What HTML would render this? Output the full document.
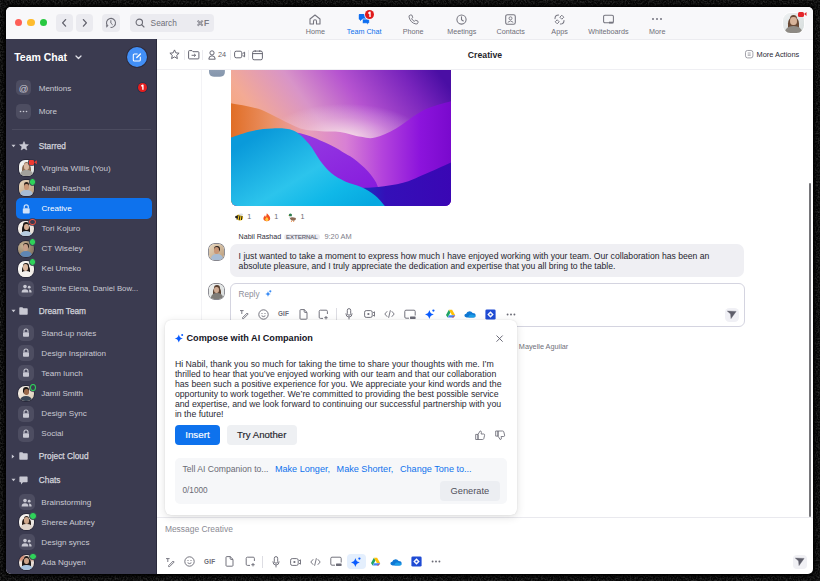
<!DOCTYPE html>
<html><head><meta charset="utf-8"><style>
html,body{margin:0;padding:0;}
body{width:820px;height:581px;overflow:hidden;position:relative;background:#0c0c0c;font-family:"Liberation Sans", sans-serif;}
.t{position:absolute;white-space:nowrap;line-height:14px;}
.b{position:absolute;box-sizing:border-box;}
.s{position:absolute;overflow:visible;}
</style></head><body>
<svg style="position:absolute;left:0;top:0" width="820" height="581"><filter id="nz"><feTurbulence type="fractalNoise" baseFrequency="0.6" numOctaves="2" seed="3"/><feColorMatrix values="0 0 0 0 0.09  0 0 0 0 0.09  0 0 0 0 0.09  0 0 0 1.1 -0.42"/></filter><rect width="820" height="581" fill="#060606"/><rect width="820" height="581" filter="url(#nz)"/></svg>
<div class="b" style="left:6px;top:6.5px;width:806.5px;height:567.5px;background:#fff;border-radius:5px;box-shadow:0 0 3px 2px #000;"></div>
<div class="b" style="left:6px;top:6.5px;width:806.5px;height:33.0px;background:#f8f8fa;border-radius:5px 5px 0 0;border-bottom:1px solid #ececf0;"></div>
<div class="b" style="left:14.900000000000002px;top:19.0px;width:7.399999999999999px;height:7.399999999999999px;background:#fe5f57;border-radius:50%;"></div>
<div class="b" style="left:27.400000000000002px;top:19.0px;width:7.400000000000002px;height:7.399999999999999px;background:#febc2e;border-radius:50%;"></div>
<div class="b" style="left:40.0px;top:19.0px;width:7.400000000000006px;height:7.399999999999999px;background:#28c840;border-radius:50%;"></div>
<div class="b" style="left:55.8px;top:14.2px;width:17.0px;height:17.7px;background:#ebebf0;border-radius:4px;"></div>
<div class="b" style="left:75.5px;top:14.2px;width:17.0px;height:17.7px;background:#ebebf0;border-radius:4px;"></div>
<div class="b" style="left:102.3px;top:14.2px;width:17.700000000000003px;height:17.7px;background:#ebebf0;border-radius:4px;"></div>
<div class="b" style="left:129.9px;top:14.2px;width:84.4px;height:17.7px;background:#ebebf0;border-radius:4px;"></div>
<svg class="s" style="left:55.8px;top:14.2px;" width="17" height="17.7" viewBox="0 0 17 17.7"><path d="M9.6 5.6 L6.6 8.85 L9.6 12.1" fill="none" stroke="#5f5f6a" stroke-width="1.3" stroke-linecap="round" stroke-linejoin="round"/></svg>
<svg class="s" style="left:75.5px;top:14.2px;" width="17" height="17.7" viewBox="0 0 17 17.7"><path d="M7.4 5.6 L10.4 8.85 L7.4 12.1" fill="none" stroke="#5f5f6a" stroke-width="1.3" stroke-linecap="round" stroke-linejoin="round"/></svg>
<svg class="s" style="left:102.3px;top:14.2px;" width="17.7" height="17.7" viewBox="0 0 17.7 17.7"><path d="M8.6 13.4 A4.5 4.5 0 1 0 5.4 11.6" fill="none" stroke="#6b6b75" stroke-width="1.05"/><path d="M3.9 11.2 L6.6 11.2 L4.6 13.7 Z" fill="#6b6b75"/><path d="M8.85 6.6 V9.1 L10.4 10.6" fill="none" stroke="#6b6b75" stroke-width="0.95" stroke-linecap="round" stroke-linejoin="round"/></svg>
<svg class="s" style="left:135px;top:18px;" width="10" height="10" viewBox="0 0 10 10"><circle cx="4.3" cy="4.3" r="3.2" fill="none" stroke="#6b6b75" stroke-width="1.1"/><path d="M6.6 6.6 L9 9" stroke="#6b6b75" stroke-width="1.1" stroke-linecap="round"/></svg>
<div class="t" style="left:150.6px;top:16.2px;font-size:8.3px;color:#6e6e78;font-weight:400;">Search</div>
<svg class="s" style="left:196.8px;top:19.9px;" width="6.3" height="6.3" viewBox="0 0 7.4 7.4"><path d="M2.5 2.5 H4.9 V4.9 H2.5 Z M2.5 2.5 V1.7 A0.9 0.9 0 1 0 1.7 2.5 H2.5 M4.9 2.5 V1.7 A0.9 0.9 0 1 1 5.7 2.5 H4.9 M4.9 4.9 V5.7 A0.9 0.9 0 1 0 5.7 4.9 H4.9 M2.5 4.9 V5.7 A0.9 0.9 0 1 1 1.7 4.9 H2.5" fill="none" stroke="#6a6a74" stroke-width="0.85"/></svg>
<div class="t" style="left:203.9px;top:16.1px;font-size:8.4px;color:#6a6a74;font-weight:400;-webkit-text-stroke:0.2px #6a6a74">F</div>
<div class="t" style="left:285.4px;width:60px;text-align:center;top:24.5px;font-size:7.2px;color:#6e6e78">Home</div>
<div class="t" style="left:334.22999999999996px;width:60px;text-align:center;top:24.5px;font-size:7.2px;color:#0e72ed">Team Chat</div>
<div class="t" style="left:383.05999999999995px;width:60px;text-align:center;top:24.5px;font-size:7.2px;color:#6e6e78">Phone</div>
<div class="t" style="left:431.89px;width:60px;text-align:center;top:24.5px;font-size:7.2px;color:#6e6e78">Meetings</div>
<div class="t" style="left:480.71999999999997px;width:60px;text-align:center;top:24.5px;font-size:7.2px;color:#6e6e78">Contacts</div>
<div class="t" style="left:529.55px;width:60px;text-align:center;top:24.5px;font-size:7.2px;color:#6e6e78">Apps</div>
<div class="t" style="left:578.38px;width:60px;text-align:center;top:24.5px;font-size:7.2px;color:#6e6e78">Whiteboards</div>
<div class="t" style="left:627.21px;width:60px;text-align:center;top:24.5px;font-size:7.2px;color:#6e6e78">More</div>
<svg class="s" style="left:309px;top:13.5px;" width="12" height="11" viewBox="0 0 12 11"><path d="M1 5 L6 1 L11 5 V10 H7.5 V7.2 A1.5 1.5 0 0 0 4.5 7.2 V10 H1 Z" fill="none" stroke="#75757f" stroke-width="1.1" stroke-linejoin="round"/></svg>
<svg class="s" style="left:357.5px;top:13px;" width="12" height="12.5" viewBox="0 0 12 12.5"><path d="M1.5 1 H7.5 Q8.5 1 8.5 2 V5.8 Q8.5 6.8 7.5 6.8 H3.4 L2 8.2 V6.8 H1.5 Q0.8 6.8 0.8 5.8 V2 Q0.8 1 1.5 1 Z" fill="#0e6ef0"/><path d="M5.2 6 H10.6 Q11.4 6 11.4 6.8 V9.6 Q11.4 10.4 10.6 10.4 H10 V11.8 L8.6 10.4 H5.2 Q4.4 10.4 4.4 9.6 V6.8 Q4.4 6 5.2 6 Z" fill="#0e6ef0" stroke="#f8f8fa" stroke-width="0.7"/></svg>
<div class="b" style="left:365px;top:9.9px;width:9px;height:8.999999999999998px;background:#e01b1b;border-radius:50%;box-shadow:0 0 0 0.8px #f8f8fa;"></div>
<svg class="s" style="left:365px;top:9.9px;" width="9" height="9" viewBox="0 0 9 9"><path d="M3.3 3.3 L5 2.2 V7" fill="none" stroke="#fff" stroke-width="1.4" stroke-linejoin="round"/></svg>
<svg class="s" style="left:407.5px;top:13.5px;" width="11" height="11" viewBox="0 0 11 11"><path d="M2.2 1 L3.8 1 L4.8 3.6 L3.6 4.6 Q4.6 6.6 6.4 7.4 L7.4 6.2 L10 7.2 L10 8.8 Q9.6 10.2 8 10 Q2.5 9 1 3 Q0.8 1.4 2.2 1 Z" fill="none" stroke="#75757f" stroke-width="0.95" stroke-linejoin="round"/></svg>
<svg class="s" style="left:456px;top:13.5px;" width="11" height="11" viewBox="0 0 11 11"><circle cx="5.5" cy="5.5" r="4.6" fill="none" stroke="#75757f" stroke-width="1.05"/><path d="M5.5 2.8 V5.7 L7.3 7" fill="none" stroke="#75757f" stroke-width="1.05" stroke-linecap="round"/></svg>
<svg class="s" style="left:505px;top:13.5px;" width="11" height="11" viewBox="0 0 11 11"><rect x="0.7" y="0.7" width="9.6" height="9.6" rx="1.8" fill="none" stroke="#75757f" stroke-width="1.05"/><circle cx="5.5" cy="4.3" r="1.5" fill="none" stroke="#75757f" stroke-width="0.9"/><path d="M2.8 8.3 Q5.5 5.5 8.2 8.3" fill="none" stroke="#75757f" stroke-width="0.9"/></svg>
<svg class="s" style="left:554px;top:13.5px;" width="11" height="11" viewBox="0 0 11 11"><path d="M1 4.6 Q1 1 4.6 1 M10 6.4 Q10 10 6.4 10" fill="none" stroke="#75757f" stroke-width="1.05" stroke-linecap="round"/><path d="M7.8 1.2 L9.8 3.2 L7.8 5.2 L5.8 3.2 Z M3.2 5.8 L5.2 7.8 L3.2 9.8 L1.2 7.8 Z" fill="none" stroke="#75757f" stroke-width="0.95" stroke-linejoin="round"/></svg>
<svg class="s" style="left:602.5px;top:13.5px;" width="11" height="11" viewBox="0 0 11 11"><rect x="0.6" y="1.2" width="9.8" height="7.6" rx="1.3" fill="none" stroke="#75757f" stroke-width="1.05"/><path d="M6 8.6 H10.4" stroke="#75757f" stroke-width="1.8"/></svg>
<svg class="s" style="left:651px;top:16px;" width="12" height="6" viewBox="0 0 12 6"><circle cx="2" cy="3" r="1" fill="#75757f"/><circle cx="6" cy="3" r="1" fill="#75757f"/><circle cx="10" cy="3" r="1" fill="#75757f"/></svg>
<div class="b" style="left:783.35px;top:12.600000000000001px;width:20.5px;height:20.5px;border-radius:7.5px;overflow:hidden;background:linear-gradient(135deg,#eef1f2,#d6dcdc);box-shadow:0 0 0 0.7px #fff"><div style="position:absolute;left:4.92px;top:4.51px;width:10.66px;height:14.35px;border-radius:45% 45% 30% 30%;background:#6a4a36"></div><div style="position:absolute;left:6.3549999999999995px;top:2.0500000000000003px;width:7.79px;height:8.200000000000001px;border-radius:50% 50% 40% 40%;background:#6a4a36"></div><div style="position:absolute;left:6.970000000000001px;top:4.1000000000000005px;width:6.5600000000000005px;height:8.61px;border-radius:50%;background:#d8b49a"></div><div style="position:absolute;left:2.0500000000000003px;top:13.120000000000001px;width:16.400000000000002px;height:12.299999999999999px;border-radius:48% 48% 0 0;background:#8e8a84"></div></div>
<div class="b" style="left:798.3px;top:11.5px;width:6.2000000000000455px;height:5.0px;background:#e4262b;border-radius:1.5px;"></div>
<svg class="s" style="left:803.5px;top:12px;" width="3" height="4" viewBox="0 0 3 4"><path d="M0 2 L2.5 0 V4 Z" fill="#e4262b"/></svg>
<div class="b" style="left:6px;top:39px;width:151px;height:535px;background:#3b3b50;border-radius:0 0 0 5px;border-right:1px solid #2a2a3c;"></div>
<div class="t" style="left:14.2px;top:50.2px;font-size:10.5px;color:#fff;font-weight:700;">Team Chat</div>
<svg class="s" style="left:74.5px;top:54.5px;" width="7" height="5" viewBox="0 0 7 5"><path d="M1 1 L3.5 3.5 L6 1" fill="none" stroke="#e0e0e8" stroke-width="1.25" stroke-linecap="round" stroke-linejoin="round"/></svg>
<div class="b" style="left:126.8px;top:46.8px;width:20.39999999999999px;height:20.400000000000006px;background:#428ff6;border-radius:50%;box-shadow:0 0 0 0.8px #2c2838;"></div>
<svg class="s" style="left:131px;top:51px;" width="12" height="12" viewBox="0 0 12 12"><path d="M6.6 3 H3.4 Q2.3 3 2.3 4.1 V8.9 Q2.3 10 3.4 10 H8.2 Q9.3 10 9.3 8.9 V5.8" fill="none" stroke="#fff" stroke-width="1.05"/><path d="M5.8 6.5 L9.4 2.9" stroke="#fff" stroke-width="1.4" stroke-linecap="round"/></svg>
<div class="b" style="left:16px;top:80.3px;width:15px;height:15.200000000000003px;background:#4d4d61;border-radius:4.5px;"></div>
<div class="t" style="left:18.8px;top:81.69999999999999px;font-size:9.5px;color:#c9c9d3;font-weight:400;">@</div>
<div class="t" style="left:38.7px;top:81.6px;font-size:8.05px;color:#cacad3;font-weight:400;">Mentions</div>
<div class="b" style="left:138.2px;top:83.3px;width:8.800000000000011px;height:8.799999999999997px;background:#e41e1e;border-radius:50%;box-shadow:0 0 0 0.8px #25304a;"></div>
<svg class="s" style="left:138.2px;top:83.3px;" width="8.8" height="8.8" viewBox="0 0 8.8 8.8"><path d="M3.3 3.2 L4.9 2.2 V6.8" fill="none" stroke="#fff" stroke-width="1.4" stroke-linejoin="round"/></svg>
<div class="b" style="left:16px;top:104px;width:15px;height:15px;background:#4d4d61;border-radius:4.5px;"></div>
<svg class="s" style="left:16px;top:104px;" width="15" height="15" viewBox="0 0 15 15"><circle cx="4.5" cy="7.5" r="0.8" fill="#c9c9d3"/><circle cx="7.5" cy="7.5" r="0.8" fill="#c9c9d3"/><circle cx="10.5" cy="7.5" r="0.8" fill="#c9c9d3"/></svg>
<div class="t" style="left:38.7px;top:105.1px;font-size:8.05px;color:#cacad3;font-weight:400;">More</div>
<div class="b" style="left:12px;top:128.5px;width:139px;height:1.0px;background:#4b4b5f;"></div>
<svg class="s" style="left:11.1px;top:143.6px;" width="5" height="4" viewBox="0 0 5 4"><path d="M0.5 0.8 H4.5 L2.5 3.3 Z" fill="#c9c9d3"/></svg>
<svg class="s" style="left:18.5px;top:140.8px;" width="10" height="10" viewBox="0 0 10 10"><path d="M5 0.6 L6.3 3.5 L9.4 3.7 L7 5.8 L7.8 8.9 L5 7.2 L2.2 8.9 L3 5.8 L0.6 3.7 L3.7 3.5 Z" fill="#c9c9d3" stroke="#c9c9d3" stroke-width="0.6" stroke-linejoin="round"/></svg>
<div class="t" style="left:38.7px;top:138.7px;font-size:7.9px;color:#d4d4dc;font-weight:400;font-size:8.3px;-webkit-text-stroke:0.25px #d4d4dc">Starred</div>
<div class="b" style="left:18.7px;top:160.2px;width:15.6px;height:15.6px;border-radius:6px;overflow:hidden;background:linear-gradient(135deg,#f4f4f2,#dfe3e2);box-shadow:0 0 0 0.7px rgba(25,25,40,0.7)"><div style="position:absolute;left:3.7439999999999998px;top:3.432px;width:8.112px;height:10.92px;border-radius:45% 45% 30% 30%;background:#8a6a52"></div><div style="position:absolute;left:4.836px;top:1.56px;width:5.928px;height:6.24px;border-radius:50% 50% 40% 40%;background:#8a6a52"></div><div style="position:absolute;left:5.304px;top:3.12px;width:4.992px;height:6.552px;border-radius:50%;background:#d9b8a0"></div><div style="position:absolute;left:1.56px;top:9.984px;width:12.48px;height:9.36px;border-radius:48% 48% 0 0;background:#a3a19c"></div></div>
<div class="b" style="left:29px;top:159.6px;width:5.399999999999999px;height:5.0px;background:#ee3b32;border-radius:1.2px;box-shadow:0 0 0 0.8px #303044;"></div>
<svg class="s" style="left:33.9px;top:159.9px;" width="3" height="4.4" viewBox="0 0 3 4.4"><path d="M0 2.2 L2.8 0.2 V4.2 Z" fill="#ee3b32"/></svg>
<div class="t" style="left:41.5px;top:161.6px;font-size:8.1px;color:#cacad3;font-weight:400;">Virginia Willis (You)</div>
<div class="b" style="left:18.7px;top:180.39999999999998px;width:15.6px;height:15.6px;border-radius:6px;overflow:hidden;background:linear-gradient(135deg,#e8d8c0,#b89a78);box-shadow:0 0 0 0.7px rgba(25,25,40,0.7)"><div style="position:absolute;left:4.836px;top:1.56px;width:5.928px;height:6.24px;border-radius:50% 50% 40% 40%;background:#2e221c"></div><div style="position:absolute;left:5.304px;top:3.12px;width:4.992px;height:6.552px;border-radius:50%;background:#c99676"></div><div style="position:absolute;left:1.56px;top:9.984px;width:12.48px;height:9.36px;border-radius:48% 48% 0 0;background:#a8bcd4"></div></div>
<div class="b" style="left:29.599999999999998px;top:178.79999999999998px;width:5.599999999999998px;height:5.600000000000023px;background:#2fd25a;border-radius:50%;border:0.8px solid #3b3b50;box-sizing:content-box;margin:-0.8px 0 0 -0.8px;"></div>
<div class="t" style="left:41.5px;top:181.79999999999998px;font-size:8.1px;color:#cacad3;font-weight:400;">Nabil Rashad</div>
<div class="b" style="left:15.9px;top:198.4px;width:136.1px;height:20.19999999999999px;background:#0e72ed;border-radius:5px;"></div>
<svg class="s" style="left:21.8px;top:203.6px;" width="8.5" height="9.6" viewBox="0 0 8.5 9.6"><path d="M2.2 4.3 V3 A2.05 2.05 0 0 1 6.3 3 V4.3" fill="none" stroke="#cfe2fb" stroke-width="1.2"/><rect x="0.8" y="4.2" width="6.9" height="5.2" rx="0.9" fill="#cfe2fb"/></svg>
<div class="t" style="left:41.5px;top:202.1px;font-size:8.1px;color:#fff;font-weight:400;">Creative</div>
<div class="b" style="left:18.4px;top:220.79999999999998px;width:15.6px;height:15.6px;border-radius:7px;overflow:hidden;background:linear-gradient(135deg,#f6f2ee,#e4dcd4);box-shadow:0 0 0 0.7px rgba(25,25,40,0.7)"><div style="position:absolute;left:3.7439999999999998px;top:3.432px;width:8.112px;height:10.92px;border-radius:45% 45% 30% 30%;background:#1e1816"></div><div style="position:absolute;left:4.836px;top:1.56px;width:5.928px;height:6.24px;border-radius:50% 50% 40% 40%;background:#1e1816"></div><div style="position:absolute;left:5.304px;top:3.12px;width:4.992px;height:6.552px;border-radius:50%;background:#d4ab90"></div><div style="position:absolute;left:1.56px;top:9.984px;width:12.48px;height:9.36px;border-radius:48% 48% 0 0;background:#b8cde0"></div></div>
<div class="b" style="left:29.2px;top:218.8px;width:6.599999999999998px;height:6.599999999999994px;background:#3b3b50;border-radius:50%;border:1.6px solid #f05040;box-shadow:0 0 0 0.8px #3b3b50;"></div>
<div class="t" style="left:41.5px;top:222.1px;font-size:8.1px;color:#cacad3;font-weight:400;">Tori Kojuro</div>
<div class="b" style="left:18.2px;top:241.0px;width:15.6px;height:15.6px;border-radius:7.5px;overflow:hidden;background:radial-gradient(circle at 30% 30%,#c9b494,#6e6254);box-shadow:0 0 0 0.7px rgba(25,25,40,0.7)"><div style="position:absolute;left:4.836px;top:1.56px;width:5.928px;height:6.24px;border-radius:50% 50% 40% 40%;background:#2a211c"></div><div style="position:absolute;left:5.304px;top:3.12px;width:4.992px;height:6.552px;border-radius:50%;background:#c8a088"></div><div style="position:absolute;left:1.56px;top:9.984px;width:12.48px;height:9.36px;border-radius:48% 48% 0 0;background:#5f86b4"></div></div>
<div class="b" style="left:29.599999999999998px;top:239.0px;width:5.599999999999998px;height:5.600000000000023px;background:#2fd25a;border-radius:50%;border:0.8px solid #3b3b50;box-sizing:content-box;margin:-0.8px 0 0 -0.8px;"></div>
<div class="t" style="left:41.5px;top:242.0px;font-size:8.1px;color:#cacad3;font-weight:400;">CT Wiseley</div>
<div class="b" style="left:18.2px;top:261.2px;width:15.6px;height:15.6px;border-radius:7px;overflow:hidden;background:linear-gradient(135deg,#fbfaf8,#ece6e0);box-shadow:0 0 0 0.7px rgba(25,25,40,0.7)"><div style="position:absolute;left:3.7439999999999998px;top:3.432px;width:8.112px;height:10.92px;border-radius:45% 45% 30% 30%;background:#1c1614"></div><div style="position:absolute;left:4.836px;top:1.56px;width:5.928px;height:6.24px;border-radius:50% 50% 40% 40%;background:#1c1614"></div><div style="position:absolute;left:5.304px;top:3.12px;width:4.992px;height:6.552px;border-radius:50%;background:#dbb69c"></div><div style="position:absolute;left:1.56px;top:9.984px;width:12.48px;height:9.36px;border-radius:48% 48% 0 0;background:#f4f0ec"></div></div>
<div class="b" style="left:29.599999999999998px;top:259.2px;width:5.599999999999998px;height:5.600000000000023px;background:#2fd25a;border-radius:50%;border:0.8px solid #3b3b50;box-sizing:content-box;margin:-0.8px 0 0 -0.8px;"></div>
<div class="t" style="left:41.5px;top:262.20000000000005px;font-size:8.1px;color:#cacad3;font-weight:400;">Kei Umeko</div>
<div class="b" style="left:18.1px;top:280.8px;width:16.0px;height:16.0px;background:#4d4d61;border-radius:5px;"></div>
<svg class="s" style="left:20.6px;top:284.3px;" width="11" height="9" viewBox="0 0 11 9"><circle cx="4" cy="2.6" r="1.8" fill="#c9c9d3"/><path d="M0.6 8.4 Q0.6 5.2 4 5.2 Q7.4 5.2 7.4 8.4 Z" fill="#c9c9d3"/><circle cx="8.2" cy="3.2" r="1.4" fill="#c9c9d3"/><path d="M8 5.6 Q10.6 5.6 10.6 8.4 H8.3" fill="#c9c9d3"/></svg>
<div class="t" style="left:41.5px;top:282.40000000000003px;font-size:8.1px;color:#cacad3;font-weight:400;font-size:7.8px">Shante Elena, Daniel Bow...</div>
<svg class="s" style="left:11.1px;top:309px;" width="5" height="4" viewBox="0 0 5 4"><path d="M0.5 0.8 H4.5 L2.5 3.3 Z" fill="#c9c9d3"/></svg>
<svg class="s" style="left:19.1px;top:307px;" width="9" height="8" viewBox="0 0 9 8"><path d="M0.3 1 Q0.3 0.3 1 0.3 H3.4 L4.3 1.3 H8 Q8.7 1.3 8.7 2 V7 Q8.7 7.7 8 7.7 H1 Q0.3 7.7 0.3 7 Z" fill="#c9c9d3"/></svg>
<div class="t" style="left:38.7px;top:304.1px;font-size:7.9px;color:#d4d4dc;font-weight:400;font-size:8.3px;-webkit-text-stroke:0.25px #d4d4dc">Dream Team</div>
<div class="b" style="left:18.1px;top:325.1px;width:16.0px;height:16.0px;background:#4d4d61;border-radius:5px;"></div>
<svg class="s" style="left:22.1px;top:328.3px;" width="8" height="9.5" viewBox="0 0 8 9.5"><path d="M2 4.3 V3 A2 2 0 0 1 6 3 V4.3" fill="none" stroke="#c9c9d3" stroke-width="1.1"/><rect x="1" y="4.2" width="6" height="4.6" rx="0.8" fill="#c9c9d3"/></svg>
<div class="t" style="left:41.3px;top:326.70000000000005px;font-size:8.1px;color:#cacad3;font-weight:400;">Stand-up notes</div>
<div class="b" style="left:18.1px;top:345.1px;width:16.0px;height:16.0px;background:#4d4d61;border-radius:5px;"></div>
<svg class="s" style="left:22.1px;top:348.3px;" width="8" height="9.5" viewBox="0 0 8 9.5"><path d="M2 4.3 V3 A2 2 0 0 1 6 3 V4.3" fill="none" stroke="#c9c9d3" stroke-width="1.1"/><rect x="1" y="4.2" width="6" height="4.6" rx="0.8" fill="#c9c9d3"/></svg>
<div class="t" style="left:41.3px;top:346.70000000000005px;font-size:8.1px;color:#cacad3;font-weight:400;">Design Inspiration</div>
<div class="b" style="left:18.1px;top:365.1px;width:16.0px;height:16.0px;background:#4d4d61;border-radius:5px;"></div>
<svg class="s" style="left:22.1px;top:368.3px;" width="8" height="9.5" viewBox="0 0 8 9.5"><path d="M2 4.3 V3 A2 2 0 0 1 6 3 V4.3" fill="none" stroke="#c9c9d3" stroke-width="1.1"/><rect x="1" y="4.2" width="6" height="4.6" rx="0.8" fill="#c9c9d3"/></svg>
<div class="t" style="left:41.3px;top:366.70000000000005px;font-size:8.1px;color:#cacad3;font-weight:400;">Team lunch</div>
<div class="b" style="left:18.4px;top:385.8px;width:15.6px;height:15.6px;border-radius:7px;overflow:hidden;background:linear-gradient(135deg,#f8f4ee,#dccbb4);box-shadow:0 0 0 0.7px rgba(25,25,40,0.7)"><div style="position:absolute;left:4.836px;top:1.56px;width:5.928px;height:6.24px;border-radius:50% 50% 40% 40%;background:#1a1614"></div><div style="position:absolute;left:5.304px;top:3.12px;width:4.992px;height:6.552px;border-radius:50%;background:#9a6a4c"></div><div style="position:absolute;left:1.56px;top:9.984px;width:12.48px;height:9.36px;border-radius:48% 48% 0 0;background:#3a4656"></div></div>
<div class="b" style="left:30.1px;top:384.2px;width:5.799999999999997px;height:7.0px;background:#3b3b50;border-radius:50%;border:1.5px solid #2fd25a;box-shadow:0 0 0 0.8px #3b3b50;"></div>
<div class="t" style="left:41.3px;top:387.3px;font-size:8.1px;color:#cacad3;font-weight:400;">Jamil Smith</div>
<div class="b" style="left:18.1px;top:405.7px;width:16.0px;height:16.0px;background:#4d4d61;border-radius:5px;"></div>
<svg class="s" style="left:22.1px;top:408.9px;" width="8" height="9.5" viewBox="0 0 8 9.5"><path d="M2 4.3 V3 A2 2 0 0 1 6 3 V4.3" fill="none" stroke="#c9c9d3" stroke-width="1.1"/><rect x="1" y="4.2" width="6" height="4.6" rx="0.8" fill="#c9c9d3"/></svg>
<div class="t" style="left:41.3px;top:407.3px;font-size:8.1px;color:#cacad3;font-weight:400;">Design Sync</div>
<div class="b" style="left:18.1px;top:425.7px;width:16.0px;height:16.0px;background:#4d4d61;border-radius:5px;"></div>
<svg class="s" style="left:22.1px;top:428.9px;" width="8" height="9.5" viewBox="0 0 8 9.5"><path d="M2 4.3 V3 A2 2 0 0 1 6 3 V4.3" fill="none" stroke="#c9c9d3" stroke-width="1.1"/><rect x="1" y="4.2" width="6" height="4.6" rx="0.8" fill="#c9c9d3"/></svg>
<div class="t" style="left:41.3px;top:427.3px;font-size:8.1px;color:#cacad3;font-weight:400;">Social</div>
<svg class="s" style="left:11.3px;top:453.5px;" width="4" height="5" viewBox="0 0 4 5"><path d="M0.8 0.5 V4.5 L3.3 2.5 Z" fill="#c9c9d3"/></svg>
<svg class="s" style="left:19.1px;top:452px;" width="9" height="8" viewBox="0 0 9 8"><path d="M0.3 1 Q0.3 0.3 1 0.3 H3.4 L4.3 1.3 H8 Q8.7 1.3 8.7 2 V7 Q8.7 7.7 8 7.7 H1 Q0.3 7.7 0.3 7 Z" fill="#c9c9d3"/></svg>
<div class="t" style="left:38.8px;top:448.90000000000003px;font-size:7.9px;color:#d4d4dc;font-weight:400;font-size:8.3px;-webkit-text-stroke:0.25px #d4d4dc">Project Cloud</div>
<svg class="s" style="left:11.1px;top:477.6px;" width="5" height="4" viewBox="0 0 5 4"><path d="M0.5 0.8 H4.5 L2.5 3.3 Z" fill="#c9c9d3"/></svg>
<svg class="s" style="left:19.2px;top:475.6px;" width="9" height="9" viewBox="0 0 9 9"><path d="M1 0.5 H8 Q8.6 0.5 8.6 1.1 V5.6 Q8.6 6.2 8 6.2 H4 L2 8.4 V6.2 H1 Q0.4 6.2 0.4 5.6 V1.1 Q0.4 0.5 1 0.5 Z" fill="#c9c9d3"/></svg>
<div class="t" style="left:38.8px;top:472.6px;font-size:7.9px;color:#d4d4dc;font-weight:400;font-size:8.3px;-webkit-text-stroke:0.25px #d4d4dc">Chats</div>
<div class="b" style="left:18.9px;top:494.1px;width:16.0px;height:16.0px;background:#4d4d61;border-radius:5px;"></div>
<svg class="s" style="left:21.4px;top:497.6px;" width="11" height="9" viewBox="0 0 11 9"><circle cx="4" cy="2.6" r="1.8" fill="#c9c9d3"/><path d="M0.6 8.4 Q0.6 5.2 4 5.2 Q7.4 5.2 7.4 8.4 Z" fill="#c9c9d3"/><circle cx="8.2" cy="3.2" r="1.4" fill="#c9c9d3"/><path d="M8 5.6 Q10.6 5.6 10.6 8.4 H8.3" fill="#c9c9d3"/></svg>
<div class="t" style="left:41.3px;top:495.70000000000005px;font-size:8.1px;color:#cacad3;font-weight:400;">Brainstorming</div>
<div class="b" style="left:18.7px;top:514.2px;width:15.6px;height:15.6px;border-radius:7px;overflow:hidden;background:linear-gradient(135deg,#f8f6f4,#e8e2dc);box-shadow:0 0 0 0.7px rgba(25,25,40,0.7)"><div style="position:absolute;left:3.7439999999999998px;top:3.432px;width:8.112px;height:10.92px;border-radius:45% 45% 30% 30%;background:#2c211b"></div><div style="position:absolute;left:4.836px;top:1.56px;width:5.928px;height:6.24px;border-radius:50% 50% 40% 40%;background:#2c211b"></div><div style="position:absolute;left:5.304px;top:3.12px;width:4.992px;height:6.552px;border-radius:50%;background:#cfa88c"></div><div style="position:absolute;left:1.56px;top:9.984px;width:12.48px;height:9.36px;border-radius:48% 48% 0 0;background:#e0d4ca"></div></div>
<div class="b" style="left:29.8px;top:512.8000000000001px;width:5.599999999999998px;height:5.599999999999909px;background:#2fd25a;border-radius:50%;border:0.8px solid #3b3b50;box-sizing:content-box;margin:-0.8px 0 0 -0.8px;"></div>
<div class="t" style="left:41.3px;top:515.6px;font-size:8.1px;color:#cacad3;font-weight:400;">Sheree Aubrey</div>
<div class="b" style="left:18.9px;top:534.4px;width:16.0px;height:16.0px;background:#4d4d61;border-radius:5px;"></div>
<svg class="s" style="left:21.4px;top:537.9px;" width="11" height="9" viewBox="0 0 11 9"><circle cx="4" cy="2.6" r="1.8" fill="#c9c9d3"/><path d="M0.6 8.4 Q0.6 5.2 4 5.2 Q7.4 5.2 7.4 8.4 Z" fill="#c9c9d3"/><circle cx="8.2" cy="3.2" r="1.4" fill="#c9c9d3"/><path d="M8 5.6 Q10.6 5.6 10.6 8.4 H8.3" fill="#c9c9d3"/></svg>
<div class="t" style="left:41.3px;top:536.0px;font-size:8.1px;color:#cacad3;font-weight:400;">Design syncs</div>
<div class="b" style="left:18.7px;top:554.8000000000001px;width:15.6px;height:15.6px;border-radius:7px;overflow:hidden;background:radial-gradient(circle at 15% 15%,rgba(200,110,80,0.7) 0 12%,transparent 28%),radial-gradient(circle at 85% 20%,rgba(190,120,90,0.6) 0 10%,transparent 25%),linear-gradient(135deg,#f0e8e0,#e2d8d0);box-shadow:0 0 0 0.7px rgba(25,25,40,0.7)"><div style="position:absolute;left:3.7439999999999998px;top:3.432px;width:8.112px;height:10.92px;border-radius:45% 45% 30% 30%;background:#1f1a18"></div><div style="position:absolute;left:4.836px;top:1.56px;width:5.928px;height:6.24px;border-radius:50% 50% 40% 40%;background:#1f1a18"></div><div style="position:absolute;left:5.304px;top:3.12px;width:4.992px;height:6.552px;border-radius:50%;background:#cda58a"></div><div style="position:absolute;left:1.56px;top:9.984px;width:12.48px;height:9.36px;border-radius:48% 48% 0 0;background:#a8c4e0"></div></div>
<div class="b" style="left:29.8px;top:553.4000000000001px;width:5.599999999999998px;height:5.599999999999909px;background:#2fd25a;border-radius:50%;border:0.8px solid #3b3b50;box-sizing:content-box;margin:-0.8px 0 0 -0.8px;"></div>
<div class="t" style="left:41.3px;top:556.2px;font-size:8.1px;color:#cacad3;font-weight:400;">Ada Nguyen</div>
<div class="b" style="left:157px;top:39.5px;width:655.5px;height:30.799999999999997px;background:#fff;border-bottom:0.9px solid #efeff3;"></div>
<svg class="s" style="left:169.4px;top:49.2px;" width="11" height="11" viewBox="0 0 11 11"><path d="M5.5 0.9 L6.9 3.9 L10.1 4.2 L7.7 6.4 L8.4 9.6 L5.5 7.9 L2.6 9.6 L3.3 6.4 L0.9 4.2 L4.1 3.9 Z" fill="none" stroke="#5f5f6b" stroke-width="0.95" stroke-linejoin="round"/></svg>
<div class="b" style="left:183.79999999999998px;top:50px;width:0.8000000000000114px;height:9.5px;background:#ebebef;"></div>
<div class="b" style="left:202.29999999999998px;top:50px;width:0.8000000000000114px;height:9.5px;background:#ebebef;"></div>
<div class="b" style="left:230.1px;top:50px;width:0.8000000000000114px;height:9.5px;background:#ebebef;"></div>
<div class="b" style="left:248.2px;top:50px;width:0.8000000000000114px;height:9.5px;background:#ebebef;"></div>
<svg class="s" style="left:187.6px;top:50px;" width="11.5" height="9.5" viewBox="0 0 11.5 9.5"><path d="M0.6 1.4 Q0.6 0.6 1.4 0.6 H4 L5 1.7 H10.1 Q10.9 1.7 10.9 2.5 V8.1 Q10.9 8.9 10.1 8.9 H1.4 Q0.6 8.9 0.6 8.1 Z" fill="none" stroke="#5f5f6b" stroke-width="0.95"/><path d="M3.6 5.3 H7.6 M6.1 3.9 L7.6 5.3 L6.1 6.7" fill="none" stroke="#5f5f6b" stroke-width="0.9"/></svg>
<svg class="s" style="left:207.5px;top:50px;" width="8" height="10" viewBox="0 0 8 10"><circle cx="4" cy="2.9" r="2.1" fill="none" stroke="#5f5f6b" stroke-width="0.95"/><path d="M0.8 9.2 Q0.8 5.8 4 5.8 Q7.2 5.8 7.2 9.2 Z" fill="none" stroke="#5f5f6b" stroke-width="0.95" stroke-linejoin="round"/></svg>
<div class="t" style="left:218px;top:47.6px;font-size:7.3px;color:#5f5f6b;font-weight:400;">24</div>
<svg class="s" style="left:234.3px;top:50.3px;" width="11.5" height="9" viewBox="0 0 11.5 9"><rect x="0.6" y="1.2" width="7.2" height="6.6" rx="1.6" fill="none" stroke="#5f5f6b" stroke-width="0.95"/><path d="M8.6 3.6 L10.6 2.2 V6.8 L8.6 5.4" fill="none" stroke="#5f5f6b" stroke-width="0.95"/></svg>
<svg class="s" style="left:252.4px;top:49.8px;" width="11" height="10.4" viewBox="0 0 11 10.4"><rect x="0.6" y="1.1" width="9.8" height="8.7" rx="1.5" fill="none" stroke="#5f5f6b" stroke-width="0.95"/><path d="M0.6 3.6 H10.4 M3.2 0.2 V2 M7.8 0.2 V2" stroke="#5f5f6b" stroke-width="0.95"/></svg>
<div class="t" style="left:435px;width:100px;text-align:center;top:47.5px;font-size:8.7px;font-weight:700;color:#1f1f2b">Creative</div>
<svg class="s" style="left:744.6px;top:50.2px;" width="8.4" height="8.4" viewBox="0 0 8.4 8.4"><rect x="0.5" y="0.5" width="7.4" height="7.4" rx="2" fill="none" stroke="#8a8a94" stroke-width="0.8"/><path d="M2.7 2.9 H5.7 M2.7 4.2 H5.7 M2.7 5.5 H5.7" stroke="#8a8a94" stroke-width="0.6"/></svg>
<div class="t" style="left:756.5px;top:48.2px;font-size:7.4px;color:#2a2a36;font-weight:400;">More Actions</div>
<div class="b" style="left:201.1px;top:70px;width:0.8000000000000114px;height:444px;background:#f3f3f6;"></div>
<div class="b" style="left:209px;top:62px;width:15.9px;height:14.8px;border-radius:5px;overflow:hidden;clip-path:inset(8px 0 0 0);background:linear-gradient(180deg,#9aa8bb,#8495ac)"></div>
<div class="b" style="left:230.7px;top:70px;width:220.7px;height:136.3px;overflow:hidden;border-radius:0 0 6px 6px"><svg width="220.7" height="136.3" viewBox="0 0 221 136" preserveAspectRatio="none" style="position:absolute;left:0;top:0">
<defs>
<linearGradient id="g0" x1="0" y1="0.6" x2="1" y2="0.15"><stop offset="0" stop-color="#f8a466"/><stop offset="0.2" stop-color="#f3aa94"/><stop offset="0.42" stop-color="#d894c8"/><stop offset="0.62" stop-color="#b654d0"/><stop offset="0.86" stop-color="#7824bc"/><stop offset="1" stop-color="#4a0ea4"/></linearGradient>
<radialGradient id="g0b" cx="0.52" cy="0.5" r="0.36" gradientTransform="translate(0.52 0.5) scale(1 0.7) rotate(-30) translate(-0.52 -0.5)"><stop offset="0" stop-color="#fff4ee" stop-opacity="0.85"/><stop offset="0.6" stop-color="#ffe8ee" stop-opacity="0.3"/><stop offset="1" stop-color="#ffffff" stop-opacity="0"/></radialGradient>
<linearGradient id="g1" x1="0" y1="0" x2="1" y2="0"><stop offset="0" stop-color="#e06c22"/><stop offset="0.18" stop-color="#ea9064"/><stop offset="0.35" stop-color="#e8a0b8"/><stop offset="0.52" stop-color="#d880d4"/><stop offset="0.68" stop-color="#b444dc"/><stop offset="0.85" stop-color="#8c14dc"/><stop offset="1" stop-color="#7808cc"/></linearGradient>
<linearGradient id="g2" x1="0" y1="0" x2="1" y2="1"><stop offset="0" stop-color="#9a48e4"/><stop offset="1" stop-color="#8414dc"/></linearGradient>
<linearGradient id="g3" x1="0" y1="0.3" x2="0.85" y2="1"><stop offset="0" stop-color="#0a9ada"/><stop offset="0.5" stop-color="#2cc4ec"/><stop offset="0.75" stop-color="#10b8e8"/><stop offset="1" stop-color="#06a8e0"/></linearGradient>
<linearGradient id="g4" x1="0" y1="0.5" x2="1" y2="0.5"><stop offset="0" stop-color="#1438c4"/><stop offset="0.3" stop-color="#3410b8"/><stop offset="1" stop-color="#3a06b4"/></linearGradient>
</defs>
<rect x="0" y="0" width="221" height="136" fill="url(#g0)"/>
<rect x="0" y="0" width="221" height="136" fill="url(#g0b)"/>
<path d="M-2.0 32.8 C2.9 33.8 18.9 36.1 27.3 38.7 C35.7 41.3 41.3 45.2 48.3 48.5 C55.3 51.8 62.3 56.2 69.3 58.3 C76.3 60.4 83.6 60.4 90.3 61.0 C97.0 61.6 102.6 60.8 109.3 61.8 C116.0 62.8 124.5 65.8 130.3 66.7 C136.1 67.6 138.5 68.8 144.3 67.4 C150.1 66.0 157.1 62.9 165.3 58.3 C173.5 53.7 183.7 44.6 193.3 40.0 C202.9 35.4 218.1 32.1 223.0 30.5 L223 138 L-2 138 Z" fill="url(#g1)"/>
<path d="M50.0 59.0 C54.4 60.0 68.0 62.3 76.3 65.0 C84.6 67.7 93.7 72.0 100.0 75.0 C106.3 78.0 110.4 80.9 114.3 83.2 C118.2 85.5 119.5 85.8 123.3 88.8 C127.1 91.8 133.3 96.7 137.3 101.4 C141.3 106.1 145.1 110.7 147.2 116.8 C149.3 122.9 149.5 134.5 150.0 138.0 L-2 138 Z" fill="url(#g2)"/>
<path d="M125.0 118.0 C128.7 117.8 139.3 117.7 147.2 116.8 C155.1 115.9 164.6 114.7 172.3 112.6 C180.0 110.5 184.9 107.8 193.3 104.2 C201.8 100.6 218.1 93.2 223.0 91.0 L223 138 L125 138 Z" fill="url(#g4)"/>
<path d="M-2.0 68.0 C1.7 66.8 13.1 62.6 20.3 61.0 C27.5 59.4 34.3 58.4 41.3 58.3 C48.3 58.2 56.2 57.9 62.3 60.4 C68.4 62.9 73.3 68.4 77.8 73.4 C82.3 78.4 85.3 85.3 89.1 90.2 C92.8 95.1 96.1 99.3 100.3 102.8 C104.5 106.3 109.3 108.9 114.3 111.2 C119.3 113.5 125.3 114.5 130.3 116.8 C135.3 119.1 140.0 121.7 144.3 125.2 C148.6 128.7 154.1 135.9 156.0 138.0 L-2 138 Z" fill="url(#g3)"/>
</svg></div>
<svg class="s" style="left:235.2px;top:213.2px;" width="9" height="8" viewBox="0 0 9 8"><ellipse cx="4.6" cy="4.5" rx="3.6" ry="2.8" fill="#f5c518" transform="rotate(20 4.6 4.5)"/><path d="M3 2 L2 6.6 M5 2.2 L4.2 7.2 M7 3 L6.4 7" stroke="#222" stroke-width="1"/><ellipse cx="6" cy="1.6" rx="2" ry="1.2" fill="#d8dde3"/><circle cx="1.4" cy="4" r="1.3" fill="#222"/></svg>
<div class="t" style="left:247.3px;top:210.3px;font-size:7.2px;color:#6a6a74;font-weight:400;">1</div>
<svg class="s" style="left:262.7px;top:213px;" width="7.5" height="8.5" viewBox="0 0 7.5 8.5"><path d="M3.8 0.3 C5.5 2 7.2 3.6 7.2 5.6 C7.2 7.4 5.6 8.3 3.8 8.3 C2 8.3 0.4 7.4 0.4 5.6 C0.4 4 1.5 3.2 2 2.2 C2.6 3 2.6 3.6 3 4 C3.5 2.6 3.6 1.6 3.8 0.3 Z" fill="#f4511e"/><path d="M3.8 4 C4.8 5 5.4 5.8 5.4 6.6 C5.4 7.6 4.6 8.2 3.8 8.2 C3 8.2 2.2 7.6 2.2 6.6 C2.2 5.8 3 5 3.8 4 Z" fill="#ffc93c"/></svg>
<div class="t" style="left:274.2px;top:210.3px;font-size:7.2px;color:#6a6a74;font-weight:400;">1</div>
<svg class="s" style="left:288.2px;top:212.7px;" width="8.5" height="9" viewBox="0 0 8.5 9"><path d="M1.6 4.8 Q4 3.6 7.8 5 Q8.2 7.6 5.4 7.8 Q2.6 7.8 1.6 4.8 Z" fill="#8b6a55"/><circle cx="2.4" cy="2" r="1.6" fill="#2e7d4f"/><path d="M0 2.6 L1 2.2 L1 3 Z" fill="#e8a13a"/><path d="M3.6 7.6 L3.4 9 M5.4 7.6 L5.8 9" stroke="#e8843a" stroke-width="0.8"/><path d="M2.2 3.2 Q2.6 4.5 1.8 5" stroke="#f0f0f0" stroke-width="1"/></svg>
<div class="t" style="left:300.5px;top:210.3px;font-size:7.2px;color:#6a6a74;font-weight:400;">1</div>
<div class="t" style="left:238.6px;top:230px;font-size:7.1px;color:#2e2e3a;font-weight:400;">Nabil Rashad</div>
<div class="b" style="left:284px;top:233.9px;width:35.69999999999999px;height:6.400000000000006px;background:#ececf1;border-radius:3px;"></div>
<div class="t" style="left:284px;width:35.7px;text-align:center;top:230.1px;font-size:6px;font-weight:400;color:#646472;-webkit-text-stroke:0.15px #646472">EXTERNAL</div>
<div class="t" style="left:324.4px;top:230px;font-size:7.45px;color:#80808a;font-weight:400;">9:20 AM</div>
<div class="b" style="left:209.3px;top:244.4px;width:15.2px;height:15.2px;border-radius:5.5px;overflow:hidden;background:linear-gradient(135deg,#e8d8c0,#b89a78);box-shadow:0 0 0 0.7px rgba(25,25,40,0.7)"><div style="position:absolute;left:4.712px;top:1.52px;width:5.776px;height:6.08px;border-radius:50% 50% 40% 40%;background:#2e221c"></div><div style="position:absolute;left:5.168px;top:3.04px;width:4.864px;height:6.3839999999999995px;border-radius:50%;background:#c99676"></div><div style="position:absolute;left:1.52px;top:9.728px;width:12.16px;height:9.12px;border-radius:48% 48% 0 0;background:#a8bcd4"></div></div>
<div class="b" style="left:230.4px;top:244.3px;width:513.9px;height:32.39999999999998px;background:#efeff3;border-radius:7px;"></div>
<div class="t" style="left:238.6px;top:250.8px;font-size:8.65px;line-height:10px;color:#26262f;white-space:normal;width:500px">I just wanted to take a moment to express how much I have enjoyed working with your team. Our collaboration has been an<br>absolute pleasure, and I truly appreciate the dedication and expertise that you all bring to the table.</div>
<div class="b" style="left:209.2px;top:283.5px;width:15px;height:15px;border-radius:5.5px;overflow:hidden;background:linear-gradient(135deg,#eef0ee,#d8dcdc);box-shadow:0 0 0 0.7px rgba(25,25,40,0.7)"><div style="position:absolute;left:3.5999999999999996px;top:3.3px;width:7.800000000000001px;height:10.5px;border-radius:45% 45% 30% 30%;background:#5a4232"></div><div style="position:absolute;left:4.65px;top:1.5px;width:5.7px;height:6.0px;border-radius:50% 50% 40% 40%;background:#5a4232"></div><div style="position:absolute;left:5.1000000000000005px;top:3.0px;width:4.8px;height:6.3px;border-radius:50%;background:#d0ac94"></div><div style="position:absolute;left:1.5px;top:9.6px;width:12.0px;height:9.0px;border-radius:48% 48% 0 0;background:#7e7c78"></div></div>
<div class="b" style="left:230.45px;top:282.95px;width:514.55px;height:44.05000000000001px;background:#fff;border:1.1px solid #d4d4e0;border-radius:6px;box-sizing:border-box;"></div>
<div class="t" style="left:238.6px;top:288px;font-size:8.2px;color:#8e8e98;font-weight:400;">Reply</div>
<svg class="s" style="left:264.8px;top:291.2px;" width="6" height="6" viewBox="0 0 8 8"><path d="M4 0 C4.3 2.4 5.6 3.7 8 4 C5.6 4.3 4.3 5.6 4 8 C3.7 5.6 2.4 4.3 0 4 C2.4 3.7 3.7 2.4 4 0 Z" fill="#3d8ef5"/></svg>
<svg class="s" style="left:269.3px;top:290px;" width="2.6" height="2.6" viewBox="0 0 2.6 2.6"><circle cx="1.3" cy="1.3" r="1.1" fill="#3d8ef5"/></svg>
<div class="b" style="left:336.20000000000005px;top:308.1px;width:0.7999999999999545px;height:12.0px;background:#dddde3;"></div>
<svg class="s" style="left:238.6px;top:309.1px;" width="10" height="10" viewBox="0 0 10 10"><path d="M1 1.6 H4.6 M2.8 1.6 V5" stroke="#6b6b76" stroke-width="0.9"/><path d="M3.6 8.6 L8.2 4 L9.2 5 L4.6 9.6 H3.6 Z" fill="none" stroke="#6b6b76" stroke-width="0.9" stroke-linejoin="round"/></svg>
<svg class="s" style="left:258.0px;top:308.6px;" width="11" height="11" viewBox="0 0 11 11"><circle cx="5.5" cy="5.5" r="4.7" fill="none" stroke="#6b6b76" stroke-width="0.95"/><circle cx="4" cy="4.5" r="0.6" fill="#6b6b76"/><circle cx="7" cy="4.5" r="0.6" fill="#6b6b76"/><path d="M3.6 6.8 Q5.5 8.4 7.4 6.8" fill="none" stroke="#6b6b76" stroke-width="0.9"/></svg>
<div class="t" style="left:275.6px;width:16px;text-align:center;top:307.1px;font-size:6.4px;font-weight:700;color:#6b6b76;letter-spacing:0.2px">GIF</div>
<svg class="s" style="left:299.4px;top:308.6px;" width="9" height="11" viewBox="0 0 9 11"><path d="M1 1.4 Q1 0.6 1.8 0.6 H5.2 L8 3.4 V9.4 Q8 10.2 7.2 10.2 H1.8 Q1 10.2 1 9.4 Z M5.2 0.6 V2.6 Q5.2 3.4 6 3.4 H8" fill="none" stroke="#6b6b76" stroke-width="0.95" stroke-linejoin="round"/></svg>
<svg class="s" style="left:317.7px;top:308.6px;" width="11" height="11" viewBox="0 0 11 11"><path d="M9.4 5 V2.4 Q9.4 1.2 8.2 1.2 H2.4 Q1.2 1.2 1.2 2.4 V8.2 Q1.2 9.4 2.4 9.4 H5" fill="none" stroke="#6b6b76" stroke-width="0.95"/><path d="M8 7 V10.4 M6.3 8.7 H9.7" stroke="#6b6b76" stroke-width="0.95"/></svg>
<svg class="s" style="left:345px;top:308.1px;" width="8" height="12" viewBox="0 0 8 12"><rect x="2.3" y="0.6" width="3.4" height="6.6" rx="1.7" fill="none" stroke="#6b6b76" stroke-width="0.95"/><path d="M0.9 5.4 Q0.9 9 4 9 Q7.1 9 7.1 5.4 M4 9 V11.4" fill="none" stroke="#6b6b76" stroke-width="0.95"/></svg>
<svg class="s" style="left:363.5px;top:309.1px;" width="11" height="10" viewBox="0 0 11 10"><rect x="0.6" y="1.6" width="7.6" height="6.8" rx="1.6" fill="none" stroke="#6b6b76" stroke-width="0.95"/><circle cx="4.4" cy="5" r="1.1" fill="#6b6b76"/><path d="M9 3.8 L10.5 2.8 V7.2 L9 6.2" fill="none" stroke="#6b6b76" stroke-width="0.9"/></svg>
<svg class="s" style="left:383.8px;top:309.1px;" width="11" height="10" viewBox="0 0 11 10"><path d="M3 2.5 L0.8 5 L3 7.5 M8 2.5 L10.2 5 L8 7.5 M6.3 1.6 L4.7 8.4" fill="none" stroke="#6b6b76" stroke-width="0.9" stroke-linecap="round" stroke-linejoin="round"/></svg>
<svg class="s" style="left:403.8px;top:308.6px;" width="12" height="11" viewBox="0 0 12 11"><path d="M5 9.2 H2 Q0.8 9.2 0.8 8 V2.4 Q0.8 1.2 2 1.2 H10 Q11.2 1.2 11.2 2.4 V6.5" fill="none" stroke="#6b6b76" stroke-width="0.95"/><rect x="6" y="7.6" width="5.6" height="2.4" rx="0.4" fill="#6b6b76"/></svg>
<svg class="s" style="left:424px;top:308.1px;" width="12" height="12" viewBox="0 0 12 12"><path d="M5.40 2.10 C6.28 4.96 6.94 5.62 9.80 6.50 C6.94 7.38 6.28 8.04 5.40 10.90 C4.52 8.04 3.86 7.38 1.00 6.50 C3.86 5.62 4.52 4.96 5.40 2.10 Z" fill="#0b5cff"/><circle cx="9.4" cy="2.6" r="1.15" fill="#0b5cff"/></svg>
<svg class="s" style="left:444.5px;top:309.1px;" width="11" height="10" viewBox="0 0 11 10"><path d="M3.9 0.8 L1 5.9 L2.6 8.6 L5.5 3.5 Z" fill="#1fa463"/><path d="M3.9 0.8 H7.1 L10.2 6.2 H7 Z" fill="#ffc107"/><path d="M2.6 8.6 H8.6 L10.2 6.2 H4.2 Z" fill="#4285f4"/><path d="M10.2 6.2 L8.6 8.6 H6.6 Z" fill="#ea4335" opacity="0.9"/></svg>
<svg class="s" style="left:464.2px;top:310.1px;" width="12" height="8" viewBox="0 0 12 8"><path d="M2.6 7.4 Q0.4 7.4 0.4 5.6 Q0.4 4 2.2 3.8 Q2.8 1.2 5.6 1.2 Q7.6 1.2 8.6 3 Q11.6 3 11.6 5.4 Q11.6 7.4 9.4 7.4 Z" fill="#0f78d4"/><path d="M4.6 7.4 Q4.4 5 7 4.6 Q8.6 4.2 9.6 5 Q11.6 5.2 11.6 6.2 Q11.6 7.4 9.4 7.4 Z" fill="#1c9ee8"/></svg>
<svg class="s" style="left:484.7px;top:308.6px;" width="11" height="11" viewBox="0 0 11 11"><rect x="0.4" y="0.4" width="10.2" height="10.2" rx="1.4" fill="#1f4bd4"/><path d="M5.5 2.3 L8.7 5.5 L5.5 8.7 L2.3 5.5 Z" fill="#fff"/><circle cx="5.5" cy="5.5" r="1.1" fill="#1f4bd4"/></svg>
<svg class="s" style="left:505.5px;top:312.6px;" width="10" height="3" viewBox="0 0 10 3"><circle cx="1.6" cy="1.5" r="0.95" fill="#6b6b76"/><circle cx="5" cy="1.5" r="0.95" fill="#6b6b76"/><circle cx="8.4" cy="1.5" r="0.95" fill="#6b6b76"/></svg>
<div class="b" style="left:724.5px;top:307.7px;width:14.5px;height:13.900000000000034px;background:#f0f0f5;border-radius:4.5px;"></div>
<svg class="s" style="left:727px;top:311px;" width="10" height="9" viewBox="0 0 10 9"><path d="M0.3 0.1 L9.1 0.4 L4 7.6 L3.6 2.9 Z" fill="#5e5e6a" stroke="#5e5e6a" stroke-width="0.4" stroke-linejoin="round"/></svg>
<div class="t" style="left:518.8px;top:339.8px;font-size:7.3px;color:#70707a;font-weight:400;">Mayelle Aguilar</div>
<div class="b" style="left:157px;top:516.8px;width:655.5px;height:1.1000000000000227px;background:#e9e9ee;"></div>
<div class="b" style="left:808.8px;top:182.7px;width:2.0px;height:334.3px;background:#76767a;border-radius:1px;"></div>
<div class="t" style="left:164.9px;top:521.8px;font-size:8.45px;color:#8a8a94;font-weight:400;">Message Creative</div>
<div class="b" style="left:347.2px;top:553.6px;width:18.69999999999999px;height:15.899999999999977px;background:#e4effd;border-radius:4px;"></div>
<div class="b" style="left:262.40000000000003px;top:555.5px;width:0.7999999999999545px;height:12.0px;background:#dddde3;"></div>
<svg class="s" style="left:165px;top:556.5px;" width="10" height="10" viewBox="0 0 10 10"><path d="M1 1.6 H4.6 M2.8 1.6 V5" stroke="#6b6b76" stroke-width="0.9"/><path d="M3.6 8.6 L8.2 4 L9.2 5 L4.6 9.6 H3.6 Z" fill="none" stroke="#6b6b76" stroke-width="0.9" stroke-linejoin="round"/></svg>
<svg class="s" style="left:184.4px;top:556.0px;" width="11" height="11" viewBox="0 0 11 11"><circle cx="5.5" cy="5.5" r="4.7" fill="none" stroke="#6b6b76" stroke-width="0.95"/><circle cx="4" cy="4.5" r="0.6" fill="#6b6b76"/><circle cx="7" cy="4.5" r="0.6" fill="#6b6b76"/><path d="M3.6 6.8 Q5.5 8.4 7.4 6.8" fill="none" stroke="#6b6b76" stroke-width="0.9"/></svg>
<div class="t" style="left:201.7px;width:16px;text-align:center;top:554.5px;font-size:6.4px;font-weight:700;color:#6b6b76;letter-spacing:0.2px">GIF</div>
<svg class="s" style="left:225.0px;top:556.0px;" width="9" height="11" viewBox="0 0 9 11"><path d="M1 1.4 Q1 0.6 1.8 0.6 H5.2 L8 3.4 V9.4 Q8 10.2 7.2 10.2 H1.8 Q1 10.2 1 9.4 Z M5.2 0.6 V2.6 Q5.2 3.4 6 3.4 H8" fill="none" stroke="#6b6b76" stroke-width="0.95" stroke-linejoin="round"/></svg>
<svg class="s" style="left:244.6px;top:556.0px;" width="11" height="11" viewBox="0 0 11 11"><path d="M9.4 5 V2.4 Q9.4 1.2 8.2 1.2 H2.4 Q1.2 1.2 1.2 2.4 V8.2 Q1.2 9.4 2.4 9.4 H5" fill="none" stroke="#6b6b76" stroke-width="0.95"/><path d="M8 7 V10.4 M6.3 8.7 H9.7" stroke="#6b6b76" stroke-width="0.95"/></svg>
<svg class="s" style="left:271.9px;top:555.5px;" width="8" height="12" viewBox="0 0 8 12"><rect x="2.3" y="0.6" width="3.4" height="6.6" rx="1.7" fill="none" stroke="#6b6b76" stroke-width="0.95"/><path d="M0.9 5.4 Q0.9 9 4 9 Q7.1 9 7.1 5.4 M4 9 V11.4" fill="none" stroke="#6b6b76" stroke-width="0.95"/></svg>
<svg class="s" style="left:290.2px;top:556.5px;" width="11" height="10" viewBox="0 0 11 10"><rect x="0.6" y="1.6" width="7.6" height="6.8" rx="1.6" fill="none" stroke="#6b6b76" stroke-width="0.95"/><circle cx="4.4" cy="5" r="1.1" fill="#6b6b76"/><path d="M9 3.8 L10.5 2.8 V7.2 L9 6.2" fill="none" stroke="#6b6b76" stroke-width="0.9"/></svg>
<svg class="s" style="left:310.0px;top:556.5px;" width="11" height="10" viewBox="0 0 11 10"><path d="M3 2.5 L0.8 5 L3 7.5 M8 2.5 L10.2 5 L8 7.5 M6.3 1.6 L4.7 8.4" fill="none" stroke="#6b6b76" stroke-width="0.9" stroke-linecap="round" stroke-linejoin="round"/></svg>
<svg class="s" style="left:330.1px;top:556.0px;" width="12" height="11" viewBox="0 0 12 11"><path d="M5 9.2 H2 Q0.8 9.2 0.8 8 V2.4 Q0.8 1.2 2 1.2 H10 Q11.2 1.2 11.2 2.4 V6.5" fill="none" stroke="#6b6b76" stroke-width="0.95"/><rect x="6" y="7.6" width="5.6" height="2.4" rx="0.4" fill="#6b6b76"/></svg>
<svg class="s" style="left:350px;top:555.5px;" width="12" height="12" viewBox="0 0 12 12"><path d="M5.40 2.10 C6.28 4.96 6.94 5.62 9.80 6.50 C6.94 7.38 6.28 8.04 5.40 10.90 C4.52 8.04 3.86 7.38 1.00 6.50 C3.86 5.62 4.52 4.96 5.40 2.10 Z" fill="#0b5cff"/><circle cx="9.4" cy="2.6" r="1.15" fill="#0b5cff"/></svg>
<svg class="s" style="left:370.3px;top:556.5px;" width="11" height="10" viewBox="0 0 11 10"><path d="M3.9 0.8 L1 5.9 L2.6 8.6 L5.5 3.5 Z" fill="#1fa463"/><path d="M3.9 0.8 H7.1 L10.2 6.2 H7 Z" fill="#ffc107"/><path d="M2.6 8.6 H8.6 L10.2 6.2 H4.2 Z" fill="#4285f4"/><path d="M10.2 6.2 L8.6 8.6 H6.6 Z" fill="#ea4335" opacity="0.9"/></svg>
<svg class="s" style="left:390px;top:557.5px;" width="12" height="8" viewBox="0 0 12 8"><path d="M2.6 7.4 Q0.4 7.4 0.4 5.6 Q0.4 4 2.2 3.8 Q2.8 1.2 5.6 1.2 Q7.6 1.2 8.6 3 Q11.6 3 11.6 5.4 Q11.6 7.4 9.4 7.4 Z" fill="#0f78d4"/><path d="M4.6 7.4 Q4.4 5 7 4.6 Q8.6 4.2 9.6 5 Q11.6 5.2 11.6 6.2 Q11.6 7.4 9.4 7.4 Z" fill="#1c9ee8"/></svg>
<svg class="s" style="left:411.1px;top:556.0px;" width="11" height="11" viewBox="0 0 11 11"><rect x="0.4" y="0.4" width="10.2" height="10.2" rx="1.4" fill="#1f4bd4"/><path d="M5.5 2.3 L8.7 5.5 L5.5 8.7 L2.3 5.5 Z" fill="#fff"/><circle cx="5.5" cy="5.5" r="1.1" fill="#1f4bd4"/></svg>
<svg class="s" style="left:431.4px;top:560.0px;" width="10" height="3" viewBox="0 0 10 3"><circle cx="1.6" cy="1.5" r="0.95" fill="#6b6b76"/><circle cx="5" cy="1.5" r="0.95" fill="#6b6b76"/><circle cx="8.4" cy="1.5" r="0.95" fill="#6b6b76"/></svg>
<div class="b" style="left:792.6px;top:555px;width:14.199999999999932px;height:13.899999999999977px;background:#f0f0f4;border-radius:4px;"></div>
<svg class="s" style="left:795.1px;top:558.3px;" width="10" height="9" viewBox="0 0 10 9"><path d="M0.3 0.1 L9.1 0.4 L4 7.6 L3.6 2.9 Z" fill="#5e5e6a" stroke="#5e5e6a" stroke-width="0.4" stroke-linejoin="round"/></svg>
<div class="b" style="left:164.6px;top:319.9px;width:352.6px;height:195.0px;background:#fff;border-radius:6px;box-shadow:0 2px 8px rgba(0,0,0,0.13),0 0 1.2px rgba(0,0,0,0.14);"></div>
<svg class="s" style="left:170px;top:330px;" width="20" height="20" viewBox="0 0 20 20"><path d="M8.80 4.40 C9.62 7.07 10.24 7.68 12.90 8.50 C10.24 9.32 9.62 9.94 8.80 12.60 C7.98 9.94 7.37 9.32 4.70 8.50 C7.37 7.68 7.98 7.07 8.80 4.40 Z" fill="#0b5cff"/><circle cx="12.2" cy="5.1" r="1" fill="#0b5cff"/></svg>
<div class="t" style="left:186.5px;top:330.9px;font-size:9.15px;color:#15151f;font-weight:700;">Compose with AI Companion</div>
<svg class="s" style="left:496.3px;top:334.6px;" width="7.2" height="7.2" viewBox="0 0 7.2 7.2"><path d="M0.8 0.8 L6.4 6.4 M6.4 0.8 L0.8 6.4" stroke="#626270" stroke-width="0.95" stroke-linecap="round"/></svg>
<div class="t" style="left:174.9px;top:360.2px;font-size:8.74px;line-height:9.9px;color:#2a2a34;white-space:nowrap">Hi Nabil, thank you so much for taking the time to share your thoughts with me. I&#8217;m<br>thrilled to hear that you&#8217;ve enjoyed working with our team and that our collaboration<br>has been such a positive experience for you. We appreciate your kind words and the<br>opportunity to work together. We&#8217;re committed to providing the best possible service<br>and expertise, and we look forward to continuing our successful partnership with you<br>in the future!</div>
<div class="b" style="left:174.9px;top:425.3px;width:45.099999999999994px;height:19.69999999999999px;background:#0e72ed;border-radius:4px;"></div>
<div class="t" style="left:174.9px;width:45.1px;text-align:center;top:428.2px;font-size:9.8px;font-weight:400;color:#fff;-webkit-text-stroke:0.15px #fff">Insert</div>
<div class="b" style="left:226.7px;top:425.3px;width:70.10000000000002px;height:19.69999999999999px;background:#eef0f3;border-radius:4px;"></div>
<div class="t" style="left:226.7px;width:70.1px;text-align:center;top:428.2px;font-size:9.6px;font-weight:400;color:#1f1f2b;-webkit-text-stroke:0.15px #1f1f2b">Try Another</div>
<svg class="s" style="left:474.8px;top:430.3px;" width="10.5" height="10.5" viewBox="0 0 10.5 10.5"><path d="M3 4.4 L5.2 0.9 Q6.6 1 6.4 2.6 L6.1 4 H8.8 Q9.9 4.2 9.6 5.3 L8.8 8.6 Q8.5 9.5 7.6 9.5 H3 Z M0.7 4.4 H3 V9.5 H0.7 Z" fill="none" stroke="#6b6b76" stroke-width="0.85" stroke-linejoin="round"/></svg>
<svg class="s" style="left:494.5px;top:429.6px;" width="10.5" height="10.5" viewBox="0 0 10.5 10.5"><g transform="translate(0 10.5) scale(1 -1)"><path d="M3 4.4 L5.2 0.9 Q6.6 1 6.4 2.6 L6.1 4 H8.8 Q9.9 4.2 9.6 5.3 L8.8 8.6 Q8.5 9.5 7.6 9.5 H3 Z M0.7 4.4 H3 V9.5 H0.7 Z" fill="none" stroke="#6b6b76" stroke-width="0.85" stroke-linejoin="round"/></g></svg>
<div class="b" style="left:174.9px;top:458.4px;width:332.5px;height:45.700000000000045px;background:#f6f7f9;border-radius:5px;"></div>
<div class="t" style="left:182.5px;top:462.3px;font-size:8.6px;color:#6a6a74;font-weight:400;">Tell AI Companion to...</div>
<div class="t" style="left:274.9px;top:462.2px;font-size:9.1px;color:#0e72ed;font-weight:400;">Make Longer,</div>
<div class="t" style="left:336.6px;top:462.2px;font-size:9.1px;color:#0e72ed;font-weight:400;">Make Shorter,</div>
<div class="t" style="left:400px;top:462.2px;font-size:9.1px;color:#0e72ed;font-weight:400;">Change Tone to...</div>
<div class="t" style="left:182.5px;top:484.2px;font-size:8.2px;color:#6a6a74;font-weight:400;">0/1000</div>
<div class="b" style="left:439.9px;top:480.8px;width:60.0px;height:20.19999999999999px;background:#eceef2;border-radius:4px;"></div>
<div class="t" style="left:439.9px;width:60px;text-align:center;top:483.9px;font-size:9.3px;color:#50505c">Generate</div>
</body></html>
